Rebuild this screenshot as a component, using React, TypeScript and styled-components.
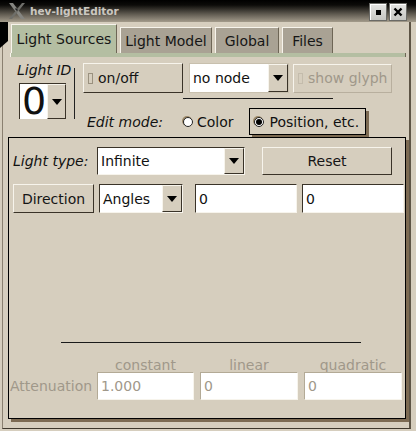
import styled, { createGlobalStyle } from 'styled-components';

const BEIGE = '#d6cebe';
const GREEN = '#b4bea2';
const TAB = '#a9a294';
const SHADOW = '#7c6a52';
const LIGHT = '#f7f4ec';
const DARK = '#3a3328';
const MUTED = '#a0988a';

const GlobalStyle = createGlobalStyle`
  html, body { margin: 0; padding: 0; background: ${BEIGE}; }
  body { font-family: "DejaVu Sans", "Noto Sans", sans-serif; font-size: 14px; color: #111; }
  * { box-sizing: border-box; }
`;

const Window = styled.div`
  position: relative;
  width: 416px;
  height: 431px;
  overflow: hidden;
  background: ${BEIGE};
  display: flex;
  flex-direction: column;
`;

const TitleBar = styled.div`
  height: 22px;
  flex: none;
  display: flex;
  align-items: center;
  padding: 0 9px 0 8px;
  background: linear-gradient(#000 0px, #0c0b09 5px, #5f5a50 14px, #a39b8b 22px);
`;

const Title = styled.span`
  margin-left: 4px;
  font-size: 10.5px;
  font-weight: bold;
  color: #cbc7bf;
  text-shadow: 0 0 1px #555;
`;

const WinButtons = styled.div`
  margin-left: auto;
  display: flex;
  gap: 2px;
  align-self: flex-start;
  margin-top: 3px;
`;

const WinButton = styled.div`
  width: 18px;
  height: 18px;
  display: flex;
  align-items: center;
  justify-content: center;
  background: linear-gradient(#e4e4e2, #c6c6c2);
  border: 1px solid #6a6a66;
  box-shadow: inset 1px 1px 0 #fff;
`;

const Dot = styled.span`
  width: 5px;
  height: 5px;
  background: #000;
`;

const Corner = styled.svg`
  position: absolute;
  left: 0;
  top: 22px;
`;

const Frame = styled.div`
  flex: 1;
  margin: 0 5px 2px 2px;
  border-left: 1px solid #8a8070;
  border-right: 2px solid #5d5445;
  border-bottom: 1px solid #3e372c;
  display: flex;
  flex-direction: column;
`;

const TabRow = styled.div`
  height: 31px;
  flex: none;
  display: flex;
  align-items: flex-end;
  gap: 3px;
  padding-left: 8px;
`;

const Tab = styled.div<{ $w: number; $active?: boolean }>`
  width: ${(p) => p.$w}px;
  height: ${(p) => (p.$active ? 29 : 26)}px;
  display: flex;
  align-items: center;
  justify-content: center;
  background: ${(p) => (p.$active ? GREEN : TAB)};
  border-top: 1px solid ${LIGHT};
  border-left: 1px solid ${LIGHT};
  border-right: 1px solid #6e6656;
  font-size: 14px;
  color: #161616;
`;

const Strip = styled.div`
  height: 4px;
  flex: none;
  margin: 0 3px 0 7px;
  background: ${GREEN};
  border-left: 1px solid ${LIGHT};
  border-right: 1px solid #6e6656;
`;

const TopArea = styled.div`
  height: 80px;
  flex: none;
  display: flex;
  align-items: flex-start;
`;

const IdGroup = styled.div`
  margin: 5px 0 0 14px;
  width: 51px;
  display: flex;
  flex-direction: column;
`;

const Italic = styled.span<{ $w?: number }>`
  font-style: italic;
  font-size: 14px;
  white-space: nowrap;
  ${(p) => (p.$w ? `width: ${p.$w}px; flex: none;` : '')}
`;

const DigitBox = styled.div`
  margin: 5px 0 0 2px;
  width: 47px;
  height: 36px;
  display: flex;
  background: #fff;
  border-top: 1px solid ${DARK};
  border-left: 1px solid ${DARK};
`;

const Digit = styled.span`
  flex: 1;
  font-size: 38px;
  line-height: 34px;
  padding-left: 2px;
`;

const Arrow = styled.div<{ $w?: number }>`
  width: ${(p) => p.$w ?? 20}px;
  flex: none;
  display: flex;
  align-items: center;
  justify-content: center;
  background: ${BEIGE};
  border-top: 1px solid ${LIGHT};
  border-left: 1px solid ${LIGHT};
  border-right: 1px solid ${DARK};
  border-bottom: 1px solid ${DARK};
  &::after {
    content: '';
    border-left: 5px solid transparent;
    border-right: 5px solid transparent;
    border-top: 6px solid #000;
  }
`;

const VSep = styled.div`
  width: 1px;
  height: 51px;
  margin: 11px 0 0 6px;
  background: #222;
`;

const RightGroup = styled.div`
  margin: 6px 0 0 8px;
  display: flex;
  flex-direction: column;
`;

const Row = styled.div<{ $gap?: number; $top?: number }>`
  display: flex;
  align-items: center;
  gap: ${(p) => p.$gap ?? 0}px;
  margin-top: ${(p) => p.$top ?? 0}px;
`;

const Button = styled.div<{ $w: number; $h: number; $left?: boolean; $disabled?: boolean }>`
  width: ${(p) => p.$w}px;
  height: ${(p) => p.$h}px;
  flex: none;
  display: flex;
  align-items: center;
  justify-content: ${(p) => (p.$left ? 'flex-start' : 'center')};
  padding-left: ${(p) => (p.$left ? 4 : 0)}px;
  background: ${BEIGE};
  color: ${(p) => (p.$disabled ? MUTED : '#151515')};
  border: 1px solid;
  border-color: ${(p) =>
    p.$disabled ? `${LIGHT} #b8af9e #b8af9e ${LIGHT}` : `${LIGHT} ${DARK} ${DARK} ${LIGHT}`};
  white-space: nowrap;
`;

const Check = styled.span<{ $disabled?: boolean }>`
  width: 5px;
  height: 11px;
  margin-right: 5px;
  border: 1px solid ${(p) => (p.$disabled ? '#c4bcac' : '#9a917f')};
  background: ${BEIGE};
`;

const Select = styled.div<{ $w: number; $h: number; $soft?: boolean }>`
  width: ${(p) => p.$w}px;
  height: ${(p) => p.$h}px;
  flex: none;
  display: flex;
  background: #fff;
  border: 1px solid;
  border-color: ${(p) => (p.$soft ? '#c8c0ae' : `${DARK} ${LIGHT} ${LIGHT} ${DARK}`)};
`;

const SelectText = styled.span`
  flex: 1;
  display: flex;
  align-items: center;
  padding-left: 3px;
  white-space: nowrap;
`;

const HLine = styled.div<{ $left: number; $w: number; $top: number }>`
  height: 1px;
  width: ${(p) => p.$w}px;
  margin-left: ${(p) => p.$left}px;
  margin-top: ${(p) => p.$top}px;
  background: #1a1a1a;
`;

const Radio = styled.span<{ $on?: boolean }>`
  width: 10px;
  height: 10px;
  flex: none;
  border-radius: 50%;
  background: #fff;
  border: 1px solid #222;
  box-shadow: -1px -1px 0 #9c8868;
  display: flex;
  align-items: center;
  justify-content: center;
  &::after {
    content: '';
    width: 6px;
    height: 6px;
    border-radius: 50%;
    background: ${(p) => (p.$on ? '#000' : 'transparent')};
  }
`;

const RadioLabel = styled.span`
  margin-left: 4px;
  white-space: nowrap;
`;

const Selected = styled.div`
  width: 117px;
  height: 27px;
  margin-left: 15px;
  display: flex;
  align-items: center;
  padding-left: 4px;
  border: 1px solid #000;
  box-shadow: 3px 3px 0 ${SHADOW};
  & > span:last-child {
    margin-left: 6px;
  }
`;

const LightPanel = styled.div`
  width: 398px;
  height: 282px;
  flex: none;
  margin-left: 5px;
  padding: 9px 0 0 4px;
  border: 1px solid #000;
  box-shadow: 3px 3px 0 ${SHADOW};
  display: flex;
  flex-direction: column;
`;

const Input = styled.div<{ $w: number; $h?: number; $disabled?: boolean }>`
  width: ${(p) => p.$w}px;
  height: ${(p) => p.$h ?? 29}px;
  flex: none;
  display: flex;
  align-items: center;
  padding-left: 3px;
  background: #fff;
  color: ${(p) => (p.$disabled ? MUTED : '#111')};
  border: 1px solid;
  border-color: ${(p) =>
    p.$disabled ? `#b3aa96 ${LIGHT} ${LIGHT} #b3aa96` : `${DARK} ${LIGHT} ${LIGHT} ${DARK}`};
`;

const AttGrid = styled.div`
  margin: 15px 0 0 -3px;
  display: grid;
  grid-template-columns: 87px 103px 104px 98px;
  grid-template-rows: 14px 28px;
  justify-items: start;
  color: ${MUTED};
`;

const AttHead = styled.span<{ $w: number }>`
  width: ${(p) => p.$w}px;
  text-align: center;
  line-height: 14px;
`;

const AttLabel = styled.span`
  align-self: center;
  white-space: nowrap;
`;

function XLogo() {
  return (
    <svg width="18" height="18" viewBox="0 0 18 18">
      <polygon points="1,1 5,1 17,17 13,17" fill="#858580" />
      <polygon points="14,1 17,1 4,17 1,17" fill="#6f6f6a" />
      <polygon points="8,6 10,8 9,9 7,7" fill="#222" />
    </svg>
  );
}

function CloseIcon() {
  return (
    <svg width="10" height="10" viewBox="0 0 10 10">
      <path d="M1.5 1.5 L8.5 8.5 M8.5 1.5 L1.5 8.5" stroke="#000" strokeWidth="2.4" />
    </svg>
  );
}

export default function App() {
  return (
    <>
      <GlobalStyle />
      <Window>
        <TitleBar>
          <XLogo />
          <Title>hev-lightEditor</Title>
          <WinButtons>
            <WinButton><Dot /></WinButton>
            <WinButton><CloseIcon /></WinButton>
          </WinButtons>
        </TitleBar>
        <Corner width="8" height="26" viewBox="0 0 8 26">
          <polygon points="0,0 8,0 8,19 0,26" fill="#000" />
        </Corner>
        <Frame>
          <TabRow>
            <Tab $w={106} $active>Light Sources</Tab>
            <Tab $w={92}>Light Model</Tab>
            <Tab $w={64}>Global</Tab>
            <Tab $w={51}>Files</Tab>
          </TabRow>
          <Strip />
          <TopArea>
            <IdGroup>
              <Italic>Light ID</Italic>
              <DigitBox>
                <Digit>0</Digit>
                <Arrow $w={19} />
              </DigitBox>
            </IdGroup>
            <VSep />
            <RightGroup>
              <Row>
                <Button $w={100} $h={30} $left>
                  <Check />on/off
                </Button>
                <Select $w={100} $h={30} $soft style={{ marginLeft: 6 }}>
                  <SelectText>no node</SelectText>
                  <Arrow />
                </Select>
                <Button $w={99} $h={29} $left $disabled style={{ marginLeft: 4 }}>
                  <Check $disabled />show glyph
                </Button>
              </Row>
              <HLine $left={100} $w={150} $top={5} />
              <Row $top={9}>
                <Italic $w={100} style={{ paddingLeft: 4 }}>Edit mode:</Italic>
                <Radio />
                <RadioLabel>Color</RadioLabel>
                <Selected>
                  <Radio $on />
                  <span>Position, etc.</span>
                </Selected>
              </Row>
            </RightGroup>
          </TopArea>
          <LightPanel>
            <Row>
              <Italic $w={84}>Light type:</Italic>
              <Select $w={148} $h={28}>
                <SelectText>Infinite</SelectText>
                <Arrow />
              </Select>
              <Button $w={130} $h={28} style={{ marginLeft: 17 }}>Reset</Button>
            </Row>
            <Row $top={9}>
              <Button $w={81} $h={29}>Direction</Button>
              <Select $w={84} $h={29} style={{ marginLeft: 5 }}>
                <SelectText>Angles</SelectText>
                <Arrow />
              </Select>
              <Input $w={102} style={{ marginLeft: 12 }}>0</Input>
              <Input $w={102} style={{ marginLeft: 5 }}>0</Input>
            </Row>
            <HLine $left={48} $w={300} $top={129} />
            <AttGrid>
              <span />
              <AttHead $w={97}>constant</AttHead>
              <AttHead $w={98}>linear</AttHead>
              <AttHead $w={98}>quadratic</AttHead>
              <AttLabel>Attenuation</AttLabel>
              <Input $w={97} $h={28} $disabled>1.000</Input>
              <Input $w={98} $h={28} $disabled>0</Input>
              <Input $w={98} $h={28} $disabled>0</Input>
            </AttGrid>
          </LightPanel>
        </Frame>
      </Window>
    </>
  );
}
